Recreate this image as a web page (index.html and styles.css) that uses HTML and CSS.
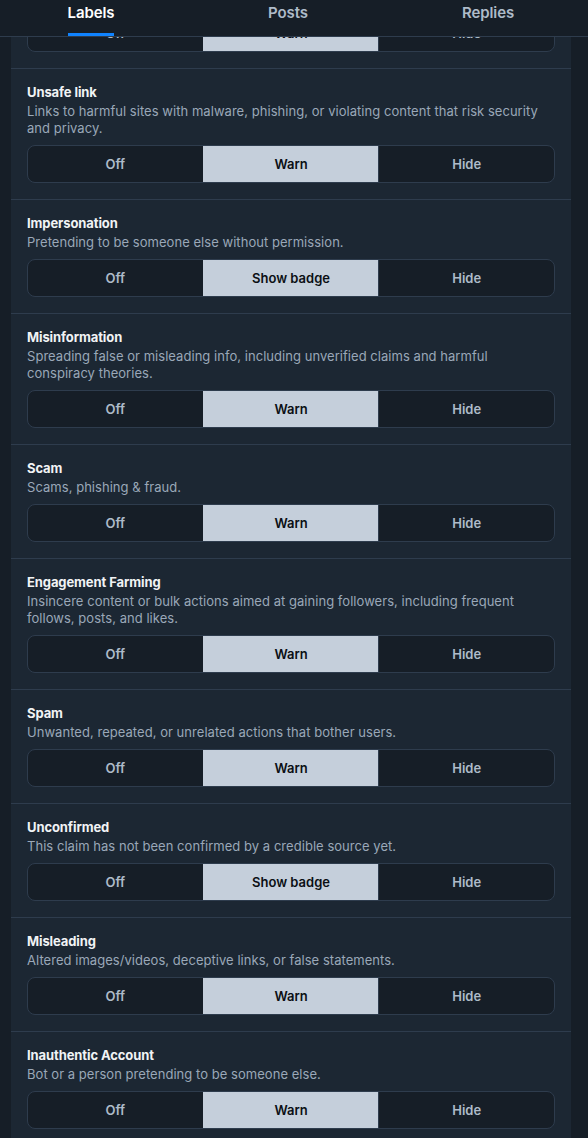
FILE: index.html
```html
<!DOCTYPE html>
<html lang="en">
<head>
<meta charset="utf-8">
<title>Labels</title>
<link rel="stylesheet" href="styles.css">
</head>
<body>
<div class="page">
  <nav class="tabs">
    <div class="tab active"><span class="tab-label">Labels</span></div>
    <div class="tab"><span class="tab-label">Posts</span></div>
    <div class="tab"><span class="tab-label">Replies</span></div>
  </nav>
  <main class="panel">
    <section class="item item-tail">
      <div class="tail-clip">
        <div class="seg">
          <div class="seg-opt">Off</div>
          <div class="seg-opt selected">Warn</div>
          <div class="seg-opt">Hide</div>
        </div>
      </div>
    </section>

    <section class="item">
      <div class="title">Unsafe link</div>
      <div class="desc">Links to harmful sites with malware, phishing, or violating content that risk security and privacy.</div>
      <div class="seg">
        <div class="seg-opt">Off</div>
        <div class="seg-opt selected">Warn</div>
        <div class="seg-opt">Hide</div>
      </div>
    </section>

    <section class="item">
      <div class="title">Impersonation</div>
      <div class="desc">Pretending to be someone else without permission.</div>
      <div class="seg">
        <div class="seg-opt">Off</div>
        <div class="seg-opt selected">Show badge</div>
        <div class="seg-opt">Hide</div>
      </div>
    </section>

    <section class="item">
      <div class="title">Misinformation</div>
      <div class="desc">Spreading false or misleading info, including unverified claims and harmful conspiracy theories.</div>
      <div class="seg">
        <div class="seg-opt">Off</div>
        <div class="seg-opt selected">Warn</div>
        <div class="seg-opt">Hide</div>
      </div>
    </section>

    <section class="item">
      <div class="title">Scam</div>
      <div class="desc">Scams, phishing &amp; fraud.</div>
      <div class="seg">
        <div class="seg-opt">Off</div>
        <div class="seg-opt selected">Warn</div>
        <div class="seg-opt">Hide</div>
      </div>
    </section>

    <section class="item">
      <div class="title">Engagement Farming</div>
      <div class="desc">Insincere content or bulk actions aimed at gaining followers, including frequent follows, posts, and likes.</div>
      <div class="seg">
        <div class="seg-opt">Off</div>
        <div class="seg-opt selected">Warn</div>
        <div class="seg-opt">Hide</div>
      </div>
    </section>

    <section class="item">
      <div class="title">Spam</div>
      <div class="desc">Unwanted, repeated, or unrelated actions that bother users.</div>
      <div class="seg">
        <div class="seg-opt">Off</div>
        <div class="seg-opt selected">Warn</div>
        <div class="seg-opt">Hide</div>
      </div>
    </section>

    <section class="item">
      <div class="title">Unconfirmed</div>
      <div class="desc">This claim has not been confirmed by a credible source yet.</div>
      <div class="seg">
        <div class="seg-opt">Off</div>
        <div class="seg-opt selected">Show badge</div>
        <div class="seg-opt">Hide</div>
      </div>
    </section>

    <section class="item">
      <div class="title">Misleading</div>
      <div class="desc">Altered images/videos, deceptive links, or false statements.</div>
      <div class="seg">
        <div class="seg-opt">Off</div>
        <div class="seg-opt selected">Warn</div>
        <div class="seg-opt">Hide</div>
      </div>
    </section>

    <section class="item">
      <div class="title">Inauthentic Account</div>
      <div class="desc">Bot or a person pretending to be someone else.</div>
      <div class="seg">
        <div class="seg-opt">Off</div>
        <div class="seg-opt selected">Warn</div>
        <div class="seg-opt">Hide</div>
      </div>
    </section>
  </main>
</div>
</body>
</html>
```

FILE: styles.css
```css
* { box-sizing: border-box; }

html, body {
  margin: 0;
  padding: 0;
  background: #161e27;
  height: 1138px;
  overflow: hidden;
}

body {
  font-family: Inter, "Noto Sans", sans-serif;
  color: #f1f3f5;
  -webkit-font-smoothing: antialiased;
}

.page {
  width: 588px;
}

.tabs {
  display: grid;
  grid-template-columns: 182px 212px 188px;
  height: 37px;
  background: #161e27;
  border-bottom: 1px solid #2e3c4d;
}

.tab {
  display: flex;
  justify-content: center;
  align-items: stretch;
}

.tab-label {
  display: block;
  font-size: 15px;
  line-height: 20px;
  font-weight: 600;
  color: #aebbc9;
  border-bottom: 3px solid transparent;
  padding-top: 3px;
  height: 36px;
  letter-spacing: -0.1px;
}

.tab.active .tab-label {
  color: #ffffff;
  border-bottom-color: #1083fe;
}

.panel {
  margin: 0 17px 0 11px;
  background: #1c2733;
  min-height: 1200px;
}

.item {
  padding: 14px 16px 16px 16px;
  border-top: 1px solid #2e3c4d;
}

.item-tail {
  padding-top: 0;
  border-top: none;
}

.tail-clip {
  height: 15px;
  overflow: hidden;
  display: flex;
  flex-direction: column;
  justify-content: flex-end;
}

.title {
  font-size: 13px;
  line-height: 19px;
  font-weight: 700;
  color: #f1f3f5;
  letter-spacing: -0.1px;
}

.desc {
  font-size: 13px;
  line-height: 17px;
  color: #9aa8b8;
  letter-spacing: 0.04px;
  margin-top: 1px;
  margin-bottom: 8px;
}

.seg {
  display: flex;
  flex-shrink: 0;
  height: 38px;
  border: 1px solid #2e3c4d;
  border-radius: 8px;
  background: #161e27;
  overflow: hidden;
}

.seg-opt {
  flex: 1;
  display: flex;
  align-items: center;
  justify-content: center;
  font-size: 13px;
  font-weight: 600;
  color: #aebbc9;
}

.seg-opt + .seg-opt {
  border-left: 1px solid #2e3c4d;
}

.seg-opt.selected {
  background: #c5cfdb;
  color: #0b0f14;
  border-left-color: #c5cfdb;
}
```
